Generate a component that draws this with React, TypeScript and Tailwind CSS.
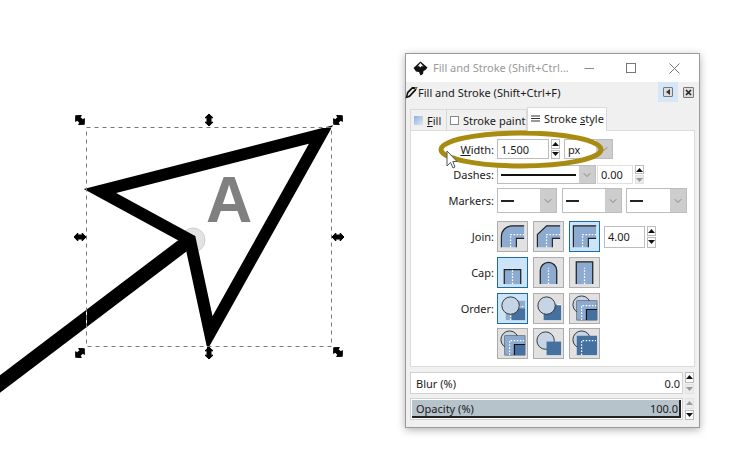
import { ChevronDown } from "lucide-react";
import type { ReactNode } from "react";

const BLUE = "#8dabd0";
const DARK = "#44719f";
const PALE = "#c6d5e6";

function Handle({ x, y, rot }: { x: number; y: number; rot: number }) {
  return (
    <path
      transform={`translate(${x} ${y}) rotate(${rot})`}
      d="M-6 0 L-2.2 -4 V-2 H2.2 V-4 L6 0 L2.2 4 V2 H-2.2 V4 Z"
      fill="#000"
      stroke="#000"
      strokeWidth="1"
      strokeLinejoin="round"
    />
  );
}

function Canvas() {
  return (
    <svg className="h-[471px] w-[405px] shrink-0" viewBox="0 0 405 471">
      <text x="229" y="222" textAnchor="middle" fontFamily="Liberation Sans" fontWeight="700" fontSize="64" fill="#808080">
        A
      </text>
      <circle cx="193" cy="240" r="12" fill="#e2e2e2" stroke="#cfcfcf" />
      <path d="M190 240 L100 191 L321 134.5 L210 333 Z" fill="none" stroke="#000" strokeWidth="12" strokeMiterlimit="20" />
      <path d="M-10 391.6 L192 238.5" stroke="#000" strokeWidth="14" />
      <rect x="86.5" y="127.5" width="245" height="219" fill="none" stroke="#fff" strokeDasharray="4 4" strokeDashoffset="4" />
      <rect x="86.5" y="127.5" width="245" height="219" fill="none" stroke="#777" strokeDasharray="4 4" />
      <Handle x={80} y={120} rot={45} />
      <Handle x={338} y={120} rot={-45} />
      <Handle x={80} y={353} rot={-45} />
      <Handle x={338} y={352} rot={45} />
      <Handle x={209} y={120} rot={90} />
      <Handle x={209} y={353} rot={90} />
      <Handle x={80} y={237} rot={0} />
      <Handle x={338} y={237} rot={0} />
    </svg>
  );
}

function Spin({ up = true, down = true }: { up?: boolean; down?: boolean }) {
  const cell = (on: boolean, flip: boolean) => (
    <div className={`flex h-1/2 w-full items-center justify-center border ${on ? "border-[#bbb] bg-white" : "border-[#e2e2e2] bg-[#ececec]"}`}>
      <svg width="7" height="4" viewBox="0 0 7 4" className={flip ? "rotate-180" : ""}>
        <path d="M3.5 0 L7 4 H0 Z" fill={on ? "#111" : "#999"} />
      </svg>
    </div>
  );
  return (
    <div className="flex h-full w-[9px] shrink-0 flex-col gap-px">
      {cell(up, false)}
      {cell(down, true)}
    </div>
  );
}

function Caret({ width = "w-[16px]" }: { width?: string }) {
  return (
    <div className={`flex h-full shrink-0 items-center justify-center bg-[#cdcdcd] ${width}`}>
      <ChevronDown size={12} strokeWidth={1.2} color="#555" />
    </div>
  );
}

function Line() {
  return <div className="ml-[3px] h-[2px] w-[13px] bg-[#222]" />;
}

function MarkerSelect({ className }: { className: string }) {
  return (
    <div className={`flex h-[25px] items-center border border-[#bdbdbd] bg-white ${className}`}>
      <div className="flex-1">
        <Line />
      </div>
      <Caret />
    </div>
  );
}

function Dots({ d }: { d: string }) {
  return <path d={d} fill="none" stroke="#fff" strokeWidth="1.3" strokeDasharray="1.6 1.6" />;
}

function IconBtn({ on, children }: { on?: boolean; children: ReactNode }) {
  return (
    <div className={`h-[31px] w-[31px] shrink-0 border ${on ? "border-[#1c6bab] bg-[#cce4f7]" : "border-[#adadad] bg-[#e1e1e1]"}`}>
      <svg width="29" height="29" viewBox="0 0 30 30">
        {children}
      </svg>
    </div>
  );
}

function JoinIcon({ outer, stroke }: { outer: string; stroke: string }) {
  return (
    <>
      <path d={outer} fill={BLUE} />
      <path d={stroke} fill="none" stroke="#222" strokeWidth="1.2" />
      <path d="M27 17 H19 V26" fill="none" stroke="#222" strokeWidth="1.2" />
      <Dots d="M13 26 V13 H27" />
    </>
  );
}

function CapIcon({ d }: { d: string }) {
  return (
    <>
      <path d={`${d} Z`} fill={BLUE} />
      <path d={d} fill="none" stroke="#222" strokeWidth="1.3" />
      <Dots d="M15 27 V10" />
    </>
  );
}

function Marker({ cx = 13, cy = 12 }: { cx?: number; cy?: number }) {
  return <circle cx={cx} cy={cy} r="9" fill={PALE} stroke="#333" strokeWidth="1" />;
}

function Order1() {
  return (
    <>
      <rect x="8" y="7" width="20" height="20" fill={BLUE} />
      <rect x="14" y="15" width="14" height="12" fill={DARK} />
      <Dots d="M13 27 V13 H27" />
      <Marker />
    </>
  );
}

function Order2() {
  return (
    <>
      <rect x="10" y="11" width="18" height="16" fill={DARK} />
      <path d="M24 11 H28" stroke="#fff" strokeWidth="1.2" />
      <Marker />
    </>
  );
}

function Order3() {
  return (
    <>
      <Marker cx={12} cy={11} />
      <rect x="7" y="7" width="21" height="20" fill={BLUE} stroke="#333" strokeWidth="0.5" />
      <rect x="17" y="16" width="11" height="11" fill={DARK} />
      <path d="M28 16 H17 V27" fill="none" stroke="#111" strokeWidth="1.2" />
      <Dots d="M12 27 V12 H27" />
    </>
  );
}

function Order4() {
  return (
    <>
      <Marker cx={12} cy={12} />
      <rect x="13" y="13" width="15" height="14" fill={DARK} />
    </>
  );
}

function Order5() {
  return (
    <>
      <Marker cx={12} cy={11} />
      <rect x="7" y="7" width="21" height="20" fill={DARK} />
      <Dots d="M12 27 V12 H27" />
    </>
  );
}

function Label({ children }: { children: ReactNode }) {
  return <div className="w-[83px] shrink-0 text-right">{children}</div>;
}

function Panel() {
  return (
    <div className="flex h-[237px] flex-col border border-[#dcdcdc] bg-white pt-[8px] text-[11px] leading-none text-[#1a1a1a]">
      <div className="flex h-[20px] items-center">
        <Label>
          <span className="underline">W</span>idth:
        </Label>
        <div className="ml-[3px] flex h-full w-[52px] items-center border border-[#bdbdbd] pl-[3px]">1.500</div>
        <div className="ml-[2px] h-full">
          <Spin />
        </div>
        <div className="ml-[4px] flex h-full w-[49px] items-center border border-[#bdbdbd] pl-[3px]">
          <span className="flex-1">px</span>
          <Caret />
        </div>
      </div>
      <div className="mt-[6px] flex h-[19px] items-center">
        <Label>Dashes:</Label>
        <div className="ml-[3px] flex h-full w-[99px] items-center border border-[#bdbdbd] bg-white">
          <div className="ml-[3px] h-[2px] flex-1 bg-[#111]" />
          <div className="ml-[3px] h-full">
            <Caret />
          </div>
        </div>
        <div className="ml-px flex h-full w-[36px] items-center border border-[#e0e0e0] pl-[3px]">0.00</div>
        <div className="ml-[2px] h-full">
          <Spin down={false} />
        </div>
      </div>
      <div className="mt-[4px] flex h-[25px] items-center">
        <Label>Markers:</Label>
        <MarkerSelect className="ml-[3px] w-[60px]" />
        <MarkerSelect className="ml-[5px] w-[60px]" />
        <MarkerSelect className="ml-[4px] w-[61px]" />
      </div>
      <div className="mt-[8px] flex items-center">
        <Label>Join:</Label>
        <div className="ml-[3px] flex items-center gap-[5px]">
          <IconBtn>
            <JoinIcon outer="M3.5 26 V15 A11 11 0 0 1 14.5 4 H27 V17 H19 V26 Z" stroke="M3.5 26 V15 A11 11 0 0 1 14.5 4 H27" />
          </IconBtn>
          <IconBtn>
            <JoinIcon outer="M3.5 26 V13 L13 4 H27 V17 H19 V26 Z" stroke="M3.5 26 V13 L13 4 H27" />
          </IconBtn>
          <IconBtn on>
            <JoinIcon outer="M3.5 26 V4 H27 V17 H19 V26 Z" stroke="M3.5 26 V4 H27" />
          </IconBtn>
        </div>
        <div className="ml-[4px] flex h-[22px] w-[41px] items-center border border-[#bdbdbd] pl-[3px]">4.00</div>
        <div className="ml-[2px] h-[22px]">
          <Spin />
        </div>
      </div>
      <div className="mt-[5px] flex items-center">
        <Label>Cap:</Label>
        <div className="ml-[3px] flex items-center gap-[5px]">
          <IconBtn on>
            <CapIcon d="M6.5 27 V12 H23.5 V27" />
          </IconBtn>
          <IconBtn>
            <CapIcon d="M6.5 27 V13 A8.5 8.5 0 0 1 23.5 13 V27" />
          </IconBtn>
          <IconBtn>
            <CapIcon d="M6.5 27 V4 H23.5 V27" />
          </IconBtn>
        </div>
      </div>
      <div className="mt-[5px] flex items-center">
        <Label>Order:</Label>
        <div className="ml-[3px] flex items-center gap-[5px]">
          <IconBtn on>
            <Order1 />
          </IconBtn>
          <IconBtn>
            <Order2 />
          </IconBtn>
          <IconBtn>
            <Order3 />
          </IconBtn>
        </div>
      </div>
      <div className="mt-[4px] ml-[86px] flex items-center gap-[5px]">
        <IconBtn>
          <Order3 />
        </IconBtn>
        <IconBtn>
          <Order4 />
        </IconBtn>
        <IconBtn>
          <Order5 />
        </IconBtn>
      </div>
    </div>
  );
}

function Slider({ label, value, fill, up, down }: { label: string; value: string; fill?: boolean; up?: boolean; down?: boolean }) {
  return (
    <div className="flex h-[22px] items-center text-[11px] leading-none text-[#1a1a1a]">
      <div className="h-full w-[273px] border border-[#d0d0d0] bg-white p-px">
        <div className={`flex h-full items-center justify-between pr-[1px] pl-[4px] ${fill ? "border-r-2 border-b-2 border-[#222] bg-[#b6c3cb]" : ""}`}>
          <span>{label}</span>
          <span>{value}</span>
        </div>
      </div>
      <div className="ml-[2px] h-full">
        <Spin up={up} down={down} />
      </div>
    </div>
  );
}

function Tabs() {
  return (
    <div className="flex h-[28px] items-end whitespace-nowrap text-[11px] leading-none text-[#1a1a1a]">
      <div className="flex h-[21px] w-[37px] items-center gap-[4px] border-t border-r border-l border-[#d9d9d9] pl-[3px]">
        <div className="h-[9px] w-[9px] shrink-0 bg-gradient-to-br from-[#8db2df] to-[#dfe8f3]" />
        <span>
          <span className="underline">F</span>ill
        </span>
      </div>
      <div className="flex h-[21px] w-[80px] items-center gap-[4px] border-t border-r border-[#d9d9d9] pl-[3px]">
        <div className="h-[9px] w-[9px] shrink-0 border border-[#888] bg-white" />
        <span>Stroke paint</span>
      </div>
      <div className="relative z-10 -mb-px flex h-[24px] w-[80px] items-center gap-[4px] border-t border-r border-l border-[#d9d9d9] bg-white pb-[2px] pl-[3px]">
        <svg width="9" height="9" viewBox="0 0 9 9" className="shrink-0">
          <path d="M0 2 H9 M0 4.5 H9 M0 7 H9" stroke="#333" strokeWidth="1" />
        </svg>
        <span>
          Stroke <span className="underline">s</span>tyle
        </span>
      </div>
    </div>
  );
}

function TitleBar() {
  return (
    <div className="flex h-[28px] items-center bg-white pl-[7px] text-[11px] text-[#999]">
      <svg width="15" height="15" viewBox="0 0 15 15" className="shrink-0">
        <path d="M7.5 0.5 L14.5 6.5 L12.5 9 L10.5 10 L10 13 L7.5 14.5 L6 11 L3 10.5 L0.5 7 Z" fill="#111" />
        <path d="M7.5 2 L10.5 5.5 L8.7 5 L7.5 6.5 L6 5 L4.5 5.5 Z" fill="#fff" />
      </svg>
      <span className="ml-[5px] w-[135px] whitespace-nowrap">Fill and Stroke (Shift+Ctrl...</span>
      <svg className="ml-[16px] shrink-0" width="11" height="11" viewBox="0 0 11 11">
        <path d="M0.5 5.5 H10" stroke="#888" />
      </svg>
      <svg className="ml-[31px] shrink-0" width="11" height="11" viewBox="0 0 11 11">
        <rect x="0.5" y="0.5" width="9" height="9" fill="none" stroke="#777" />
      </svg>
      <svg className="ml-[32px] shrink-0" width="11" height="11" viewBox="0 0 11 11">
        <path d="M0.5 0.5 L10.5 10.5 M10.5 0.5 L0.5 10.5" stroke="#777" />
      </svg>
    </div>
  );
}

function DockBar() {
  return (
    <div className="-ml-px flex h-[20px] items-center text-[11px] leading-none text-[#1a1a1a]">
      <svg width="13" height="13" viewBox="0 0 13 13" className="shrink-0">
        <path d="M0.5 12.5 L2 6 L7 1 H12.5 L11 4.5 L5 11 Z" fill="#111" />
        <path d="M2.5 10.5 L3.5 7 L7.5 3 L10 3 L5 8.5 Z" fill="#f2f2f2" />
        <path d="M9.5 1.5 L12 1.5 L11 3.5 Z" fill="#e6c13d" />
      </svg>
      <span className="whitespace-nowrap">Fill and Stroke (Shift+Ctrl+F)</span>
      <div className="ml-auto flex h-full w-[20px] items-center justify-center bg-[#d6e8f7]">
        <div className="flex h-[10px] w-[10px] items-center justify-center rounded-[1px] border border-[#777] bg-[#ddd]">
          <svg width="4" height="6" viewBox="0 0 4 6">
            <path d="M4 0 V6 L0 3 Z" fill="#333" />
          </svg>
        </div>
      </div>
      <div className="mr-[1px] ml-[5px] flex h-[11px] w-[11px] items-center justify-center rounded-[1px] border border-[#777] bg-[#ddd]">
        <svg width="7" height="7" viewBox="0 0 7 7">
          <path d="M1 1 L6 6 M6 1 L1 6" stroke="#222" strokeWidth="1.6" />
        </svg>
      </div>
      <div className="w-[4px]" />
    </div>
  );
}

export default function App() {
  return (
    <div className="flex h-[471px] w-[748px] overflow-hidden bg-white font-['Noto_Sans',sans-serif]">
      <Canvas />
      <div className="relative mt-[53px] h-[375px] w-[295px] shrink-0 border border-[#9a9a9a] bg-[#f0f0f0] shadow-[0_2px_8px_rgba(0,0,0,0.3)]">
        <TitleBar />
        <DockBar />
        <div className="px-[4px]">
          <Tabs />
          <Panel />
          <div className="mt-[5px] flex flex-col gap-[4px]">
            <Slider label="Blur (%)" value="0.0" up down={false} />
            <Slider label="Opacity (%)" value="100.0" fill up={false} down />
          </div>
        </div>
        <svg className="pointer-events-none absolute top-[70px] left-[30px]" width="175" height="50" viewBox="0 0 175 50">
          <ellipse cx="85" cy="25.5" rx="80" ry="16.5" fill="none" stroke="#a88c12" strokeWidth="5" />
        </svg>
        <svg className="pointer-events-none absolute top-[96px] left-[40px]" width="12" height="20" viewBox="0 0 12 20">
          <path d="M1 1 V16 L4.5 12.5 L7 18 L9 17 L6.8 11.5 L11 11.5 Z" fill="#fff" stroke="#555" strokeWidth="1" />
        </svg>
      </div>
    </div>
  );
}
